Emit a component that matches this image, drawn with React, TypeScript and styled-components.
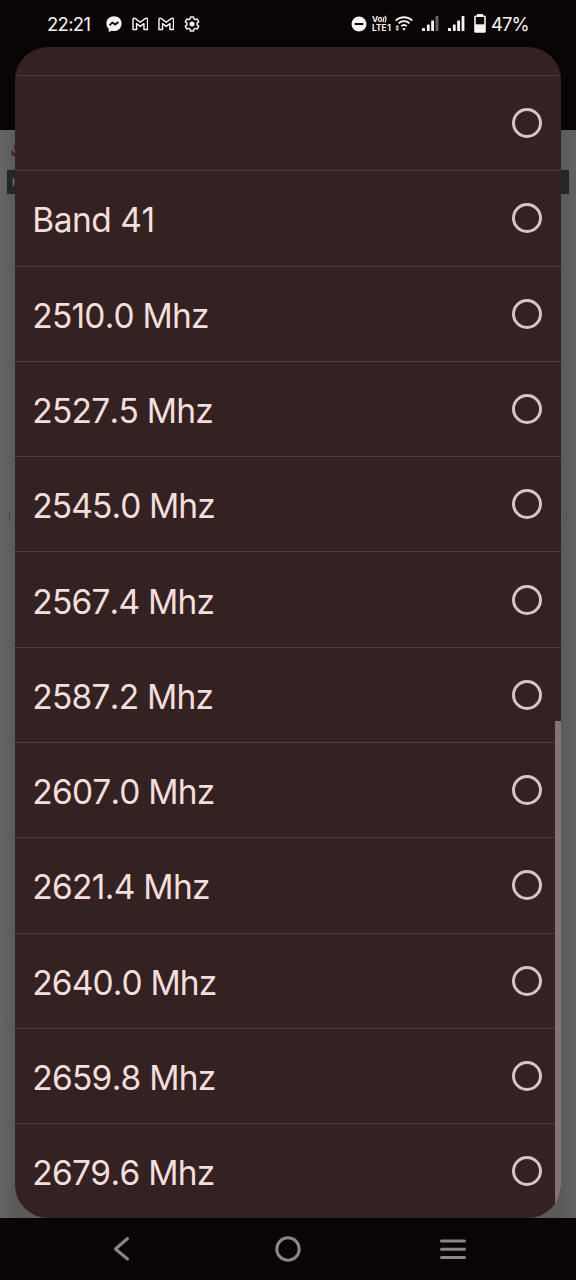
import React from "react";
import styled, { createGlobalStyle } from "styled-components";

const GlobalStyle = createGlobalStyle`
  *, *::before, *::after { box-sizing: border-box; }
  body { margin: 0; background: #090504; }
`;

const Phone = styled.div`
  position: relative;
  display: flex;
  flex-direction: column;
  width: 576px;
  height: 1280px;
  overflow: hidden;
  background: #090504;
  font-family: Inter, "Liberation Sans", sans-serif;
`;

const StatusBar = styled.header`
  display: flex;
  align-items: center;
  justify-content: space-between;
  flex: none;
  height: 47px;
  padding: 0 48px 0 47px;
  color: #f7f3f2;
`;

const StatusGroup = styled.div`
  display: flex;
  align-items: center;
`;

const Clock = styled.span`
  width: 59px;
  font-size: 18.5px;
  line-height: 24px;
  letter-spacing: -0.7px;
`;

const BatteryLevel = styled.span`
  width: 37px;
  margin-left: 5px;
  font-size: 18.5px;
  line-height: 24px;
  letter-spacing: -0.9px;
  white-space: nowrap;
  padding-top: 1px;
`;

const StatusIcon = styled.svg<{ $gap?: number }>`
  display: block;
  flex: none;
  margin-left: ${({ $gap = 0 }) => $gap}px;
`;

const Backdrop = styled.div`
  flex: 1;
  display: flex;
  flex-direction: column;
  padding-top: 83px;
`;

const DimmedPage = styled.div`
  flex: 1;
  display: flex;
  flex-direction: column;
  padding-top: 12px;
  background: linear-gradient(90deg, #666666 0, #5a5a59 15px, #5a5b59 561px, #62635f 576px);
`;

const PageLogo = styled.svg`
  display: block;
  flex: none;
  margin-left: 10px;
`;

const PageHeading = styled.div`
  flex: none;
  height: 24px;
  margin: 11px 7px 0;
  padding-left: 5px;
  background: #232727;
  color: #858585;
  font-size: 10px;
  line-height: 24px;
`;

const PageField = styled.div`
  flex: none;
  height: 9px;
  margin: 318px 9px 0;
  border-left: 1px solid #4c4c4c;
  border-right: 1px solid #4c4c4c;
`;

const Sheet = styled.ul`
  position: absolute;
  top: 47px;
  left: 15px;
  width: 546px;
  height: 1171px;
  margin: 0;
  padding: 28px 0 0;
  overflow: hidden;
  border-radius: 33px;
  background: #342222;
  list-style: none;
`;

const Option = styled.li`
  display: flex;
  align-items: center;
  justify-content: space-between;
  height: 95.29px;
  padding: 0 19px 0 17.3px;
  border-top: 1.4px solid #4d3b3a;
  color: #f3dedd;
`;

const Label = styled.span<{ $spacing: number }>`
  font-size: 33.5px;
  line-height: 40px;
  font-weight: 400;
  font-kerning: none;
  letter-spacing: ${({ $spacing }) => $spacing}px;
  white-space: nowrap;
  padding-top: 4px;
`;

const Radio = styled.span`
  width: 30px;
  height: 30px;
  border: 3px solid #dac4c3;
  border-radius: 50%;
`;

const Scrollbar = styled.div`
  position: absolute;
  top: 674px;
  right: 0;
  bottom: 0;
  width: 6px;
  background: #877171;
`;

const NavBar = styled.nav`
  display: flex;
  align-items: center;
  justify-content: space-between;
  flex: none;
  height: 62px;
  padding: 0 108px 0 107px;
`;

const NavIcon = styled.svg`
  display: block;
  fill: none;
  stroke: #8a8685;
  stroke-width: 3;
  stroke-linecap: round;
  stroke-linejoin: round;
`;

const options = [
  { label: "", spacing: 0 },
  { label: "Band 41", spacing: -0.5 },
  { label: "2510.0 Mhz", spacing: -0.8 },
  { label: "2527.5 Mhz", spacing: -0.75 },
  { label: "2545.0 Mhz", spacing: -0.9 },
  { label: "2567.4 Mhz", spacing: -0.8 },
  { label: "2587.2 Mhz", spacing: -0.75 },
  { label: "2607.0 Mhz", spacing: -0.8 },
  { label: "2621.4 Mhz", spacing: -0.7 },
  { label: "2640.0 Mhz", spacing: -0.87 },
  { label: "2659.8 Mhz", spacing: -0.75 },
  { label: "2679.6 Mhz", spacing: -0.7 },
];

const Messenger = () => (
  <StatusIcon width="16" height="16" viewBox="0 0 16 16">
    <path d="M8 .3C3.600.3.4 3.400.4 7.500c0 2.200.9 4 2.300 5.300v2.400c0 .5.500.7.900.5l2-.9c.8.200 1.600.3 2.400.3 4.400 0 7.600-3.200 7.600-7.600S12.400.3 8 .3Z" fill="currentColor" />
    <path d="m3.600 9.300 2.700-2.800 2.900 2 3.200-2.500" fill="none" stroke="#090504" strokeWidth="1.800" strokeLinejoin="round" />
  </StatusIcon>
);

const Gmail = () => (
  <StatusIcon $gap={9.5} width="16.5" height="14" viewBox="0 0 17 14">
    <path d="M1 12.700V2.400C1 .9 2.500.6 3.500 1.400L8.500 5.200l5-3.800C14.500.6 16 .9 16 2.400v10.300h-3.700V6.600L8.500 9.500 4.700 6.600v6.100Z" fill="none" stroke="currentColor" strokeWidth="1.500" strokeLinejoin="round" />
  </StatusIcon>
);

const Gear = () => (
  <StatusIcon $gap={9.5} width="16" height="16" viewBox="0 0 16 16">
    <path d="M6.500.9h3l.5 2 1.200.7 2-.6 1.500 2.600-1.500 1.500v1.800l1.500 1.500-1.500 2.600-2-.6-1.200.7-.5 2h-3l-.5-2-1.200-.7-2 .6-1.500-2.600 1.500-1.500V7.100L1.300 5.600 2.800 3l2 .6L6 2.900Z" fill="none" stroke="currentColor" strokeWidth="1.500" strokeLinejoin="round" />
    <circle cx="8" cy="8" r="2.500" fill="currentColor" />
  </StatusIcon>
);

const DoNotDisturb = () => (
  <StatusIcon width="16" height="16" viewBox="0 0 16 16">
    <circle cx="8" cy="8" r="7.500" fill="currentColor" />
    <path d="M3.700 8h8.600" stroke="#090504" strokeWidth="2" />
  </StatusIcon>
);

const VoLte = () => (
  <StatusIcon $gap={4.5} width="20" height="17" viewBox="0 0 20 17" fill="currentColor" fontFamily="Inter, sans-serif" fontWeight="700">
    <text x="0" y="7" fontSize="7.500" textLength="10.500" lengthAdjust="spacingAndGlyphs">Vo</text>
    <path d="M11 7.200 12 2M13 .8c1.200 1.500 1.200 4 0 6.500" fill="none" stroke="currentColor" strokeWidth="1.200" />
    <text x="0" y="16" fontSize="8.500" textLength="14.500" lengthAdjust="spacingAndGlyphs">LTE</text>
    <text x="15.300" y="16" fontSize="8.500">1</text>
  </StatusIcon>
);

const Wifi = () => (
  <StatusIcon $gap={3.5} width="18" height="16" viewBox="0 0 18 16">
    <g fill="none" stroke="currentColor" strokeWidth="1.800">
      <path d="M.7 4.700C5.300.1 12.700.1 17.300 4.700" />
      <path d="M3.500 7.400c3.200-3 7.800-3 11 0" />
      <path d="M6.200 10.200c1.700-1.500 3.900-1.500 5.600 0" />
    </g>
    <path d="m7.200 12.500 1.800 2.300 1.800-2.300q-1.800-1.200-3.600 0M.4 11.500l1.900-2.600 1.900 2.600ZM.4 12.500l1.900 2.600 1.900-2.600Z" fill="currentColor" />
  </StatusIcon>
);

const Signal = ({ gap, faded }: { gap: number; faded?: boolean }) => (
  <StatusIcon $gap={gap} width="17" height="15" viewBox="0 0 17 15" fill="currentColor">
    <rect x="0" y="12" width="3" height="3" rx=".5" />
    <rect x="4.900" y="8.500" width="2.800" height="6.500" rx=".5" />
    <rect x="9.200" y="4.500" width="2.800" height="10.500" rx=".5" />
    <rect x="13.600" y="0" width="2.800" height="15" rx=".5" opacity={faded ? 0.4 : 1} />
  </StatusIcon>
);

const Battery = () => (
  <StatusIcon $gap={9} width="12" height="19" viewBox="0 0 12 19">
    <path d="M3 0h6v2H3z" fill="currentColor" />
    <rect x="1" y="2.200" width="10" height="15.800" rx=".6" fill="none" stroke="currentColor" strokeWidth="1.600" />
    <path d="M1 10.300h10v7.700H1z" fill="currentColor" />
  </StatusIcon>
);

export default function App() {
  return (
    <Phone>
      <GlobalStyle />
      <StatusBar>
        <StatusGroup>
          <Clock>22:21</Clock>
          <Messenger />
          <Gmail />
          <Gmail />
          <Gear />
        </StatusGroup>
        <StatusGroup>
          <DoNotDisturb />
          <VoLte />
          <Wifi />
          <Signal gap={8.5} faded />
          <Signal gap={9.5} />
          <Battery />
          <BatteryLevel>47%</BatteryLevel>
        </StatusGroup>
      </StatusBar>
      <Backdrop>
        <DimmedPage>
          <PageLogo width="12" height="17" viewBox="0 0 12 17">
            <path d="M2 7Q0 12 3 14l5 2v-4Q3 12 2 7ZM5 2 3.500 6 8 10V7Z" fill="#4f2029" />
          </PageLogo>
          <PageHeading>H</PageHeading>
          <PageField />
        </DimmedPage>
      </Backdrop>
      <NavBar>
        <NavIcon width="30" height="30" viewBox="0 0 30 30">
          <path d="M20.500 4.500 8.500 15l12 10" />
        </NavIcon>
        <NavIcon width="30" height="30" viewBox="0 0 30 30">
          <circle cx="15" cy="15" r="11.200" />
        </NavIcon>
        <NavIcon width="30" height="30" viewBox="0 0 30 30">
          <path d="M3.500 7h23M3.500 15.200h23M3.500 23.400h23" />
        </NavIcon>
      </NavBar>
      <Sheet>
        {options.map(({ label, spacing }, index) => (
          <Option key={index}>
            <Label $spacing={spacing}>{label}</Label>
            <Radio />
          </Option>
        ))}
        <Scrollbar />
      </Sheet>
    </Phone>
  );
}
